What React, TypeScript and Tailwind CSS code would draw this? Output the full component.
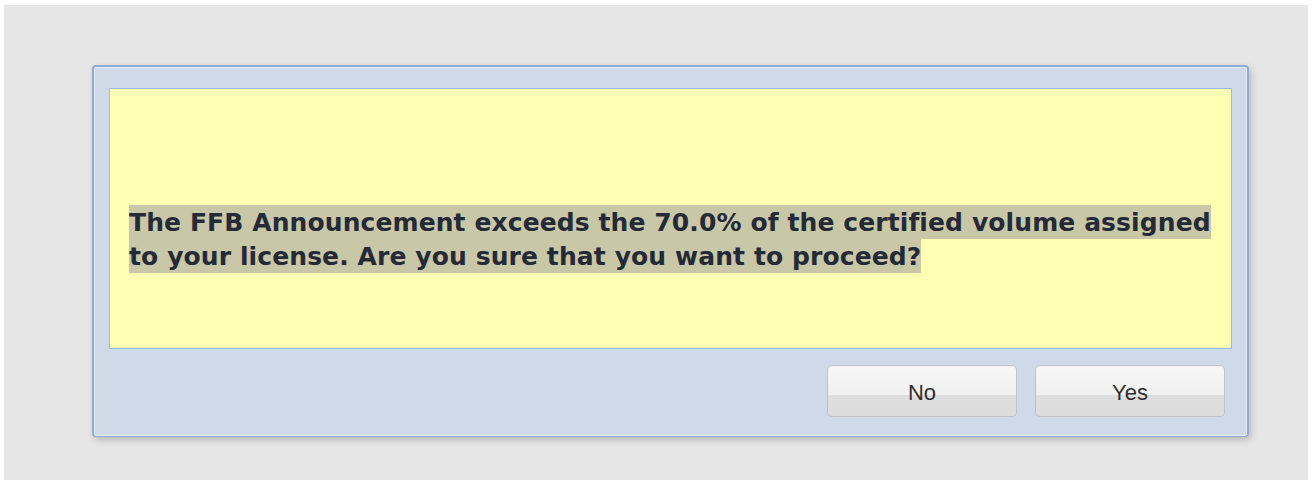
export default function App() {
  return (
    <div className="w-[1312px] h-[485px] bg-white pt-[5px] pb-[5px] pl-[4px] pr-[4px]">
      <div className="h-full bg-[#e6e6e6] pl-[88px] pt-[60px]">
        {/* message box window */}
        <div className="w-[1157px] h-[372px] rounded-[4px] border-2 border-[#8fa9cf] bg-[#cedae7] shadow-[2px_3px_7px_rgba(0,0,0,0.2)] flex flex-col">
          <div className="flex-1 flex flex-col rounded-[2px] border border-[#e6edf5] pt-[20px] pl-[14px] pr-[14px] pb-[18px]">
            <div className="h-[261px] border border-[#99bbe8] bg-[#ffffb3] pl-[19px] pr-[4px] pt-[116px]">
              <p className="font-['DejaVu_Sans',sans-serif] font-bold text-[25px] leading-[34px] tracking-[0.1px] text-[#252a36]">
                <span className="bg-[#c8c8a8] py-[2.5px] box-decoration-clone">
                  The FFB Announcement exceeds the 70.0% of the certified volume assigned to your license. Are you sure that you want to proceed?
                </span>
              </p>
            </div>
            <div className="flex justify-end gap-[18px] mt-[16px] pr-[7px]">
              {["No", "Yes"].map((label) => (
                <button
                  key={label}
                  className="w-[190px] h-[52px] pt-[2px] rounded-[5px] border border-[#bfc3ca] bg-[linear-gradient(#f6f6f6_0%,#f1f1f1_58%,#dedede_58%,#dcdcdc_100%)] font-['Liberation_Sans',Arial,sans-serif] text-[22px] text-[#2e2e2e]"
                >
                  {label}
                </button>
              ))}
            </div>
          </div>
        </div>
      </div>
    </div>
  );
}
